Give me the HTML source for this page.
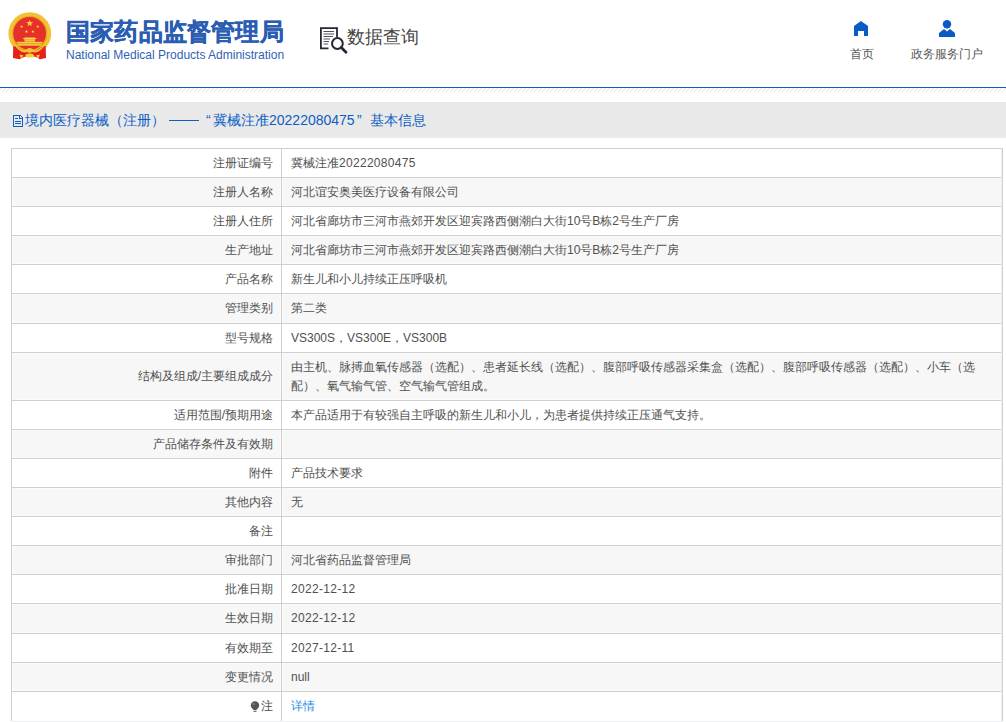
<!DOCTYPE html>
<html><head><meta charset="utf-8">
<style>
*{margin:0;padding:0;box-sizing:border-box}
html,body{width:1006px;height:722px;overflow:hidden;background:#fff;font-family:"Liberation Sans",sans-serif;color:#555}
.abs{position:absolute}
#hdr-line{left:0;top:87px;width:1006px;height:1px;background:#0b5dc3}
#hatch{left:0;top:88px;width:1006px;height:4px;background:repeating-linear-gradient(45deg,#fff 0,#fff 2px,#e6e6e6 2px,#e6e6e6 3px,#fff 3px,#fff 4px)}
#t1{left:66px;top:15px;font-size:24px;font-weight:900;color:#2b5db2;-webkit-text-stroke:0.35px #2b5db2;letter-spacing:0.2px;white-space:nowrap;line-height:34px}
#t2{left:66px;top:48px;font-size:12px;color:#2f62b5;white-space:nowrap;line-height:14px}
#sq{left:347px;top:24px;font-size:18px;color:#444;white-space:nowrap;line-height:26px}
.nav{font-size:12px;color:#555;white-space:nowrap;line-height:14px}
#band{left:0;top:102px;width:1006px;height:36px;background:#e9e9e9;border-bottom:1px solid #e9ecf2}
.ttl{top:110px;font-size:14px;color:#0c5ec5;white-space:nowrap;line-height:20px}
#tbl{left:11px;top:148px;width:992px;height:573px;border-left:1px solid #cfcfcf;border-right:1px solid #cfcfcf}
.row{position:absolute;left:0;width:990px;border-top:1px solid #cfcfcf;display:flex}
.n{letter-spacing:0.3px}
.row.g{background:#f7f7f7}
.row.g .lab,.row.g .val{box-shadow:inset 0 0 0 1px #fbfbfb}
.lab{width:269px;flex:none;display:flex;align-items:center;justify-content:flex-end;padding-right:8px;font-size:12px;color:#505050;white-space:nowrap;line-height:19px}
.val{flex:1;display:flex;align-items:center;padding-left:9px;font-size:12px;color:#505050;line-height:19px;border-left:1px solid #cfcfcf}
</style></head><body>
<!-- emblem -->
<svg class="abs" style="left:0;top:0" width="60" height="64" viewBox="0 0 60 64">
  <circle cx="29.8" cy="33.6" r="21.4" fill="#f2c233"/>
  <circle cx="29.7" cy="33.4" r="17.6" fill="#e2a91e"/>
  <circle cx="29.6" cy="33.3" r="16.4" fill="#e8302a"/>
  <polygon points="29.70,19.70 30.58,22.09 33.12,22.19 31.13,23.76 31.82,26.21 29.70,24.80 27.58,26.21 28.27,23.76 26.28,22.19 28.82,22.09" fill="#f8d33a"/>
  <polygon points="21.60,24.90 22.04,25.99 23.22,26.07 22.31,26.83 22.60,27.98 21.60,27.35 20.60,27.98 20.89,26.83 19.98,26.07 21.16,25.99" fill="#f8d33a"/>
  <polygon points="37.80,24.90 38.24,25.99 39.42,26.07 38.51,26.83 38.80,27.98 37.80,27.35 36.80,27.98 37.09,26.83 36.18,26.07 37.36,25.99" fill="#f8d33a"/>
  <polygon points="26.50,29.80 26.94,30.89 28.12,30.97 27.21,31.73 27.50,32.88 26.50,32.25 25.50,32.88 25.79,31.73 24.88,30.97 26.06,30.89" fill="#f8d33a"/>
  <polygon points="32.90,29.80 33.34,30.89 34.52,30.97 33.61,31.73 33.90,32.88 32.90,32.25 31.90,32.88 32.19,31.73 31.28,30.97 32.46,30.89" fill="#f8d33a"/>
  <path d="M22.6 38.6 L25 37.4 H34.4 L36.8 38.6 L35 39.4 H24.4Z" fill="#f8d84a"/>
  <rect x="24.5" y="39.3" width="10.5" height="2.4" fill="#f0c83a"/>
  <rect x="16.7" y="41.8" width="25.8" height="1.6" fill="#f6d040"/>
  <rect x="17.5" y="43.4" width="24.2" height="2.4" fill="#f0c234"/>
  <path d="M13.2 46 L17 47 Q23 51 29.7 53 Q36 51 42 47 L45.7 46 L46 58 L40 59.2 L36 57 Q30 55 24 57 L19.5 59.2 L13 58 Z" fill="#e3231b"/>
  <path d="M14 44.5 Q20 50 25 50.5 Q28 47.5 29.7 48 Q31.5 47.5 34.5 50.5 Q39.5 50 45.5 44.5 Q41 51.5 35 52.5 Q31.5 52.2 29.7 50.8 Q28 52.2 24.5 52.5 Q18.5 51.5 14 44.5Z" fill="#f2c233"/>
  <ellipse cx="29.7" cy="55.5" rx="4.2" ry="2" fill="#f4cf3a"/>
  <path d="M19.5 54.5 L23.5 55.5 L21 58.5Z M39.9 54.5 L35.9 55.5 L38.4 58.5Z" fill="#f4cf3a"/>
</svg>
<div id="t1" class="abs">国家药品监督管理局</div>
<div id="t2" class="abs">National Medical Products Administration</div>
<!-- search doc icon -->
<svg class="abs" style="left:318px;top:25px" width="32" height="30" viewBox="0 0 32 30">
  <path d="M19 3.2 H2.9 V23.4 H10.5" fill="none" stroke="#262636" stroke-width="1.8"/>
  <path d="M19 2.3 V12" fill="none" stroke="#262636" stroke-width="1.8"/>
  <path d="M5.5 6.5 H16 M5.5 9 H16 M5.5 11.5 H15 M5.5 14 H12 M5.5 16.5 H11 M5.5 19 H10" stroke="#50505c" stroke-width="1"/>
  <circle cx="19.4" cy="18.5" r="5.4" fill="#fff" stroke="#262636" stroke-width="2"/>
  <path d="M23.3 22.6 L28 27.3" stroke="#262636" stroke-width="2.8" stroke-linecap="round"/>
</svg>
<div id="sq" class="abs">数据查询</div>
<!-- home -->
<svg class="abs" style="left:854px;top:21px" width="14" height="15" viewBox="0 0 14 15">
  <polygon points="0,5 7,0 14,5 14,15 10,15 10,10 4,10 4,15 0,15" fill="#0a5cc4"/>
</svg>
<div class="abs nav" style="left:850px;top:47px">首页</div>
<svg class="abs" style="left:939px;top:20px" width="16" height="17" viewBox="0 0 16 17">
  <circle cx="8" cy="4.2" r="4.2" fill="#0a5cc4"/>
  <polygon points="0,13 5,9 8,11.5 11,9 16,13 16,17 0,17" fill="#0a5cc4"/>
</svg>
<div class="abs nav" style="left:911px;top:47px">政务服务门户</div>
<div id="hdr-line" class="abs"></div>
<svg class="abs" style="left:0;top:88px" width="1006" height="4"><defs><pattern id="hp" width="4" height="4" patternUnits="userSpaceOnUse"><rect x="1" y="0" width="1" height="1" fill="#e0e0e0"/><rect x="0" y="1" width="1" height="1" fill="#e0e0e0"/><rect x="3" y="2" width="1" height="1" fill="#e0e0e0"/><rect x="2" y="3" width="1" height="1" fill="#e0e0e0"/></pattern></defs><rect width="1006" height="4" fill="url(#hp)"/></svg>
<div id="band" class="abs"></div>
<svg class="abs" style="left:13px;top:115px" width="10" height="12" viewBox="0 0 10 12" shape-rendering="crispEdges">
  <g fill="#0c5ec5"><rect x="0" y="0" width="8" height="1"/><rect x="0" y="0" width="1" height="12"/><rect x="0" y="11" width="10" height="1"/><rect x="9" y="2" width="1" height="10"/>
  <rect x="6" y="0" width="1" height="3"/><rect x="6" y="3" width="4" height="1"/><rect x="8" y="1" width="1" height="1"/><rect x="7" y="0" width="1" height="1"/><rect x="9" y="2" width="1" height="1"/>
  <rect x="2" y="3" width="3" height="1"/><rect x="2" y="6" width="6" height="1"/><rect x="2" y="8" width="6" height="1"/></g>
</svg>
<div class="abs ttl" style="left:25px">境内医疗器械（注册）</div>
<div class="abs" style="left:169px;top:120px;width:30px;height:1px;background:#0c5ec5"></div>
<div class="abs ttl" style="left:206px">“</div>
<div class="abs ttl" style="left:213px">冀械注准20222080475</div>
<div class="abs ttl" style="left:357px">”</div>
<div class="abs ttl" style="left:370px">基本信息</div>
<div id="tbl" class="abs">
<div class="row" style="top:0px;height:29px"><div class="lab">注册证编号</div><div class="val">冀械注准<span class="n">20222080475</span></div></div>
<div class="row g" style="top:29px;height:29px"><div class="lab">注册人名称</div><div class="val">河北谊安奥美医疗设备有限公司</div></div>
<div class="row" style="top:58px;height:29px"><div class="lab">注册人住所</div><div class="val">河北省廊坊市三河市燕郊开发区迎宾路西侧潮白大街10号B栋2号生产厂房</div></div>
<div class="row g" style="top:87px;height:29px"><div class="lab">生产地址</div><div class="val">河北省廊坊市三河市燕郊开发区迎宾路西侧潮白大街10号B栋2号生产厂房</div></div>
<div class="row" style="top:116px;height:29px"><div class="lab">产品名称</div><div class="val">新生儿和小儿持续正压呼吸机</div></div>
<div class="row g" style="top:145px;height:30px"><div class="lab">管理类别</div><div class="val">第二类</div></div>
<div class="row" style="top:175px;height:29px"><div class="lab">型号规格</div><div class="val">VS300S，VS300E，VS300B</div></div>
<div class="row g" style="top:204px;height:48px"><div class="lab">结构及组成/主要组成成分</div><div class="val">由主机、脉搏血氧传感器（选配）、患者延长线（选配）、腹部呼吸传感器采集盒（选配）、腹部呼吸传感器（选配）、小车（选<br>配）、氧气输气管、空气输气管组成。</div></div>
<div class="row" style="top:252px;height:29px"><div class="lab">适用范围/预期用途</div><div class="val">本产品适用于有较强自主呼吸的新生儿和小儿，为患者提供持续正压通气支持。</div></div>
<div class="row g" style="top:281px;height:29px"><div class="lab">产品储存条件及有效期</div><div class="val"></div></div>
<div class="row" style="top:310px;height:29px"><div class="lab">附件</div><div class="val">产品技术要求</div></div>
<div class="row g" style="top:339px;height:29px"><div class="lab">其他内容</div><div class="val">无</div></div>
<div class="row" style="top:368px;height:29px"><div class="lab">备注</div><div class="val"></div></div>
<div class="row g" style="top:397px;height:29px"><div class="lab">审批部门</div><div class="val">河北省药品监督管理局</div></div>
<div class="row" style="top:426px;height:29px"><div class="lab">批准日期</div><div class="val"><span class="n">2022-12-12</span></div></div>
<div class="row g" style="top:455px;height:30px"><div class="lab">生效日期</div><div class="val"><span class="n">2022-12-12</span></div></div>
<div class="row" style="top:485px;height:29px"><div class="lab">有效期至</div><div class="val"><span class="n">2027-12-11</span></div></div>
<div class="row g" style="top:514px;height:29px"><div class="lab">变更情况</div><div class="val">null</div></div>
<div class="row" style="top:543px;height:30px"><div class="lab"><svg width="10" height="12" viewBox="0 0 10 12" style="vertical-align:-1px;margin-right:1px"><circle cx="5" cy="4.4" r="4.2" fill="#555"/><path d="M2.8 7.2 H7.2 L6.3 9.2 H3.7Z" fill="#555"/><rect x="3.5" y="10" width="3" height="1" fill="#777"/><circle cx="3.6" cy="3" r="1" fill="#888"/></svg>注</div><div class="val"><span style="color:#2a8ae6">详情</span></div></div>

</div>
<div class="abs" style="left:1001px;top:149px;width:1px;height:572px;background:#eef0f8"></div>
<div class="abs" style="left:12px;top:721px;width:990px;height:1px;background:#eef0f8"></div>
</body></html>
